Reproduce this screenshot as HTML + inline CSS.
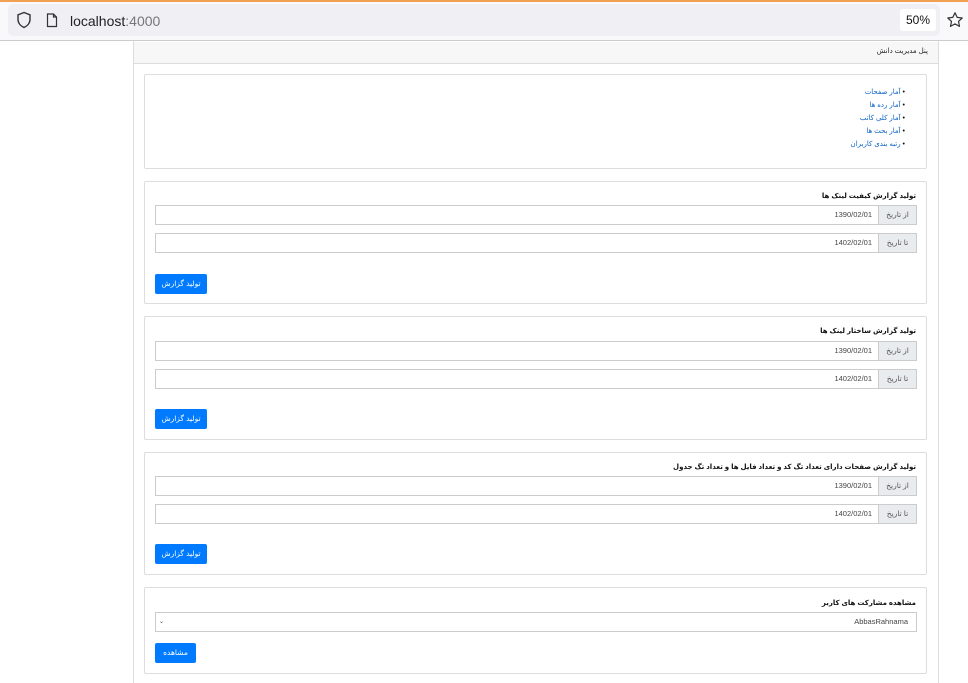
<!DOCTYPE html>
<html><head><meta charset="utf-8"><style>
*{box-sizing:border-box;margin:0;padding:0}
body{width:968px;height:683px;overflow:hidden;background:#fff;font-family:"Liberation Sans","DejaVu Sans",sans-serif;position:relative}
.a{position:absolute}
.bar{left:0;top:0;width:968px;height:41px;background:#f9f9fb;border-top:2px solid #f0a050;border-bottom:1px solid #ccc}
.url{left:8px;top:4px;width:932px;height:32px;background:#f0f0f4;border-radius:5px}
.zoomb{left:900px;top:9px;width:36px;height:22px;background:#fff;border-radius:3px;font-size:12px;line-height:22px;text-align:center;color:#111}
.cont{left:133px;top:41px;width:806px;height:642px;border-left:1px solid #ddd;border-right:1px solid #ddd}
.hdr{left:134px;top:42px;width:804px;height:22px;background:#f7f7f7;border-bottom:1px solid #ddd;font-size:7px;text-align:right;padding-right:10px;line-height:20px;color:#222}
.card{left:144px;width:783px;border:1px solid #ddd;border-radius:2px}
.t{font-size:7px;color:#111;font-weight:bold;text-align:right;direction:rtl;width:772px;left:144px}
.inp{left:155px;width:762px;height:20px;border:1px solid #ccc;font-size:7.5px;color:#444;line-height:18px}
.inp .v{position:absolute;right:44px;top:0}
.inp .ad{position:absolute;right:0;top:0;width:38px;height:18px;background:#e9ecef;border-left:1px solid #ccc;text-align:center;line-height:18px;color:#555}
.btn{left:155px;height:20px;background:#007bff;color:#fff;font-size:7.5px;line-height:20px;text-align:center;border-radius:2px}
ul{position:absolute;right:63px;top:85px;direction:rtl;font-size:7px;color:#0b63c5;list-style:none}
ul li{height:13px;line-height:13px;white-space:nowrap}
ul li:before{content:"• ";color:#111}
</style></head><body>
<div class="a bar"></div>
<div class="a url"></div>
<svg class="a" style="left:16px;top:11px" width="16" height="18" viewBox="0 0 16 18"><path d="M8 1.5L2 3.8v4.6c0 4 3 6.8 6 8.1 3-1.3 6-4.1 6-8.1V3.8z" fill="none" stroke="#333" stroke-width="1.4"/></svg>
<svg class="a" style="left:46px;top:13px" width="12" height="15" viewBox="0 0 12 15"><path d="M1.5 1h6l3 3v9.5h-9z M7.5 1v3h3" fill="none" stroke="#333" stroke-width="1.2"/></svg>
<div class="a" style="left:70px;top:13px;font-size:14px;color:#222">localhost<span style="color:#777">:4000</span></div>
<div class="a zoomb">50%</div>
<svg class="a" style="left:946px;top:11px" width="18" height="18" viewBox="0 0 18 18"><path d="M9 1.8l2.2 4.6 5 .6-3.7 3.4 1 5L9 12.9l-4.5 2.5 1-5L1.8 7l5-.6z" fill="none" stroke="#333" stroke-width="1.2" stroke-linejoin="round"/></svg>
<div class="a cont"></div>
<div class="a hdr">پنل مدیریت دانش</div>
<div class="a card" style="top:74px;height:95px"></div>
<ul style="top:86px"><li>آمار صفحات</li><li>آمار رده ها</li><li>آمار کلی کاتب</li><li>آمار بحث ها</li><li>رتبه بندی کاربران</li></ul>

<div class="a card" style="top:181px;height:123px"></div>
<div class="a t" style="top:192px">تولید گزارش کیفیت لینک ها</div>
<div class="a inp" style="top:205px"><span class="v">1390/02/01</span><span class="ad">از تاریخ</span></div>
<div class="a inp" style="top:233px"><span class="v">1402/02/01</span><span class="ad">تا تاریخ</span></div>
<div class="a btn" style="top:274px;width:52px">تولید گزارش</div>

<div class="a card" style="top:316px;height:124px"></div>
<div class="a t" style="top:327px">تولید گزارش ساختار لینک ها</div>
<div class="a inp" style="top:341px"><span class="v">1390/02/01</span><span class="ad">از تاریخ</span></div>
<div class="a inp" style="top:369px"><span class="v">1402/02/01</span><span class="ad">تا تاریخ</span></div>
<div class="a btn" style="top:409px;width:52px">تولید گزارش</div>

<div class="a card" style="top:452px;height:123px"></div>
<div class="a t" style="top:463px">تولید گزارش صفحات دارای تعداد تگ کد و تعداد فایل ها و تعداد تگ جدول</div>
<div class="a inp" style="top:476px"><span class="v">1390/02/01</span><span class="ad">از تاریخ</span></div>
<div class="a inp" style="top:504px"><span class="v">1402/02/01</span><span class="ad">تا تاریخ</span></div>
<div class="a btn" style="top:544px;width:52px">تولید گزارش</div>

<div class="a card" style="top:587px;height:87px"></div>
<div class="a t" style="top:599px">مشاهده مشارکت های کاربر</div>
<div class="a inp" style="top:612px"><span class="v" style="right:8px">AbbasRahnama</span><span style="position:absolute;left:3px;top:0;font-size:6px">⌄</span></div>
<div class="a btn" style="top:643px;width:41px">مشاهده</div>
</body></html>
